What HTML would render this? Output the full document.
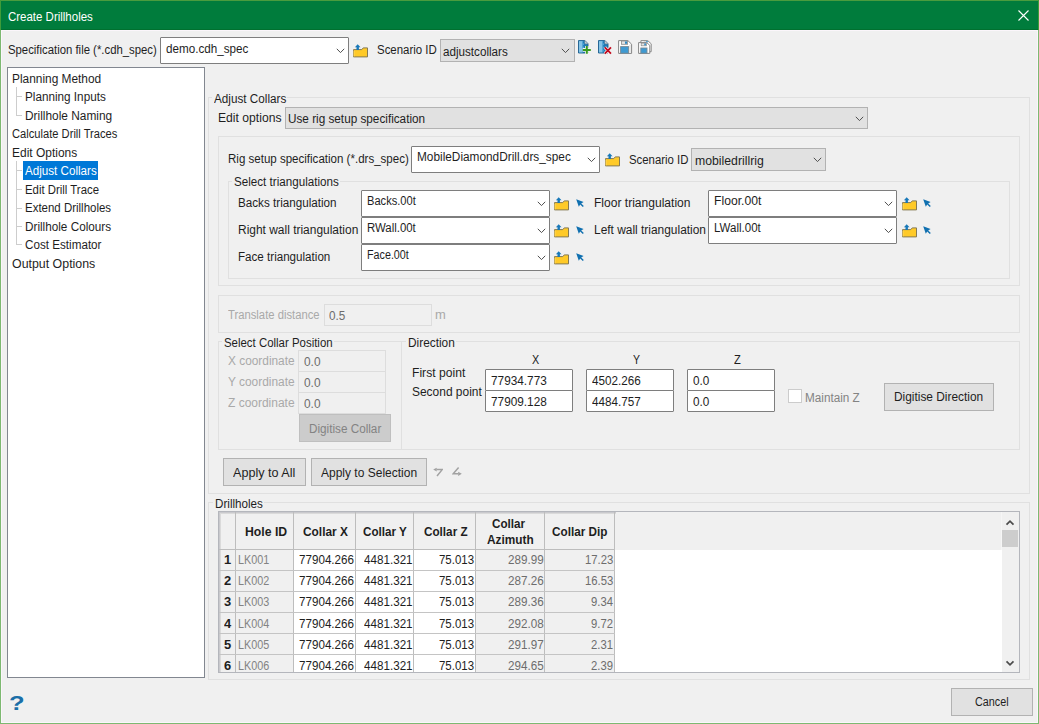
<!DOCTYPE html><html><head><meta charset='utf-8'><title>Create Drillholes</title><style>
html,body{margin:0;padding:0;background:#F0F0F0;}#w{position:relative;width:1039px;height:724px;overflow:hidden;font-family:"Liberation Sans", sans-serif;font-size:12.5px;line-height:16px;color:#1E1E1E;}.a{position:absolute;display:block;}.t{position:absolute;white-space:pre;transform-origin:0 0;display:block;}
</style></head><body><div id='w'>
<div class="a" style="left:0px;top:0px;width:1039px;height:724px;background:#F0F0F0;"></div>
<div class="a" style="left:0px;top:0px;width:1039px;height:30px;background:#007C3C;"></div>
<div class="a" style="left:0px;top:29px;width:1039px;height:1px;background:#00702F;"></div>
<div class="a" style="left:0px;top:0px;width:1039px;height:1px;background:#4A9C3E;"></div>
<div class="a" style="left:1px;top:30px;width:1037px;height:1px;background:#FBF6FB;"></div>
<div class="a" style="left:1px;top:31px;width:1px;height:692px;background:#FBF6FB;"></div>
<div class="a" style="left:1037px;top:31px;width:1px;height:692px;background:#FBF6FB;"></div>
<div class="a" style="left:1px;top:722px;width:1037px;height:1px;background:#FBF6FB;"></div>
<div class="a" style="left:0px;top:0px;width:1px;height:30px;background:#3F9B3A;"></div>
<div class="a" style="left:1038px;top:0px;width:1px;height:30px;background:#3F9B3A;"></div>
<div class="a" style="left:0px;top:30px;width:1px;height:694px;background:#7DB971;"></div>
<div class="a" style="left:1038px;top:30px;width:1px;height:694px;background:#7DB971;"></div>
<div class="a" style="left:0px;top:723px;width:1039px;height:1px;background:#7DB971;"></div>
<svg class="a" style="left:1017px;top:9px" width="13" height="13" viewBox="0 0 13 13"><path d="M1.5 1.5 L11.5 11.5 M11.5 1.5 L1.5 11.5" stroke="#fff" stroke-width="1.1" fill="none"/></svg>
<div class="a" style="left:160px;top:37px;width:189px;height:27px;background:#fff;border:1px solid #7E7E7E;box-sizing:border-box;border-radius:1px;"></div>
<svg class="a" style="left:335.5px;top:47.5px" width="9" height="6" viewBox="0 0 9 6"><path d="M0.8 0.8 L4.5 4.6 L8.2 0.8" stroke="#505050" stroke-width="1" fill="none"/></svg>
<svg class="a" style="left:352.5px;top:43.5px" width="16" height="14" viewBox="0 0 16 14"><path d="M0.5 5.6 H8.8 L10.2 3.9 H14.5 V12.9 H0.5 Z" fill="#FFCA28" stroke="#857A55" stroke-width="1" stroke-linejoin="round"/><path d="M1 6.6 V12.4" stroke="#FFD75E" stroke-width="1"/><path d="M4.7 0.3 L7.5 3.3 H5.9 V6 H3.5 V3.3 H1.9 Z" fill="#1878B8"/></svg>
<div class="a" style="left:440px;top:39px;width:135px;height:23px;background:#E1E1E1;border:1px solid #B2B2B2;box-sizing:border-box;"></div>
<svg class="a" style="left:561px;top:47.5px" width="9" height="6" viewBox="0 0 9 6"><path d="M0.8 0.8 L4.5 4.6 L8.2 0.8" stroke="#505050" stroke-width="1" fill="none"/></svg>
<svg class="a" style="left:578px;top:40px" width="14" height="15" viewBox="0 0 14 15"><path d="M0.5 0.6 H6.9 L10 3.8 V13 H0.5 Z" fill="#1E7BB5" stroke="#1C5F8E" stroke-width="0.9"/><rect x="1" y="1.1" width="3.4" height="11.4" fill="#86C4E6"/><path d="M4.4 1.1 H5.4 L4.8 2.6 L6 4.2 L4.9 5.8 L6 7.4 L4.9 9 L5.8 10.6 L4.8 12.5 H4.4 Z" fill="#5FAFDC"/><path d="M6.9 0.6 V3.8 H10 Z" fill="#DCE6EC" stroke="#7C8790" stroke-width="0.6"/><path d="M8.8 5.9 V13.9 M4.7 9.9 H12.9" stroke="#F4F4F4" stroke-width="3.6" fill="none"/><path d="M8.8 6.1 V13.8 M4.8 9.9 H12.8" stroke="#3A9A1F" stroke-width="2" fill="none"/></svg>
<svg class="a" style="left:598px;top:40px" width="14" height="15" viewBox="0 0 14 15"><path d="M0.5 0.6 H6.9 L10 3.8 V13 H0.5 Z" fill="#1E7BB5" stroke="#1C5F8E" stroke-width="0.9"/><rect x="1" y="1.1" width="3.4" height="11.4" fill="#86C4E6"/><path d="M4.4 1.1 H5.4 L4.8 2.6 L6 4.2 L4.9 5.8 L6 7.4 L4.9 9 L5.8 10.6 L4.8 12.5 H4.4 Z" fill="#5FAFDC"/><path d="M6.9 0.6 V3.8 H10 Z" fill="#DCE6EC" stroke="#7C8790" stroke-width="0.6"/><path d="M6.8 7.4 L13 13.6 M13 7.4 L6.8 13.6" stroke="#F4F4F4" stroke-width="3.2" fill="none"/><path d="M6.8 7.4 L13 13.6 M13 7.4 L6.8 13.6" stroke="#C20A1E" stroke-width="1.8" fill="none"/></svg>
<svg class="a" style="left:618px;top:40px" width="15" height="15" viewBox="0 0 15 15"><path d="M0.6 0.6 H9.9 L13.6 4.2 V13.4 H0.6 Z" fill="#fff" stroke="#858585" stroke-width="1"/><rect x="11.2" y="4.4" width="1.8" height="8.4" fill="#E8E8E8"/><rect x="3.4" y="1" width="6.2" height="3.3" fill="#E4E4E4" stroke="#8A8A8A" stroke-width="0.8"/><rect x="7" y="1.5" width="2" height="2.3" fill="#2E8AC6"/><rect x="2.6" y="6.6" width="8" height="6.6" fill="#3E9AD2" stroke="#7A8A94" stroke-width="0.9"/></svg>
<svg class="a" style="left:638px;top:40px" width="15" height="15" viewBox="0 0 15 15"><path d="M2.9 0.6 H9.7 L13.2 3.8 V11.7 H2.9 Z" fill="#fff" stroke="#8A8A8A" stroke-width="1"/><rect x="5.8" y="1" width="4" height="1.5" fill="#DCDCDC"/><rect x="8.2" y="1" width="1.6" height="1.4" fill="#3E9AD2"/><path d="M0.6 2.6 H8.8 L11.8 5.4 V13.4 H0.6 Z" fill="#fff" stroke="#858585" stroke-width="1"/><rect x="3.2" y="3.1" width="5.2" height="2.7" fill="#E4E4E4" stroke="#8A8A8A" stroke-width="0.7"/><rect x="6.3" y="3.5" width="1.6" height="1.9" fill="#2E8AC6"/><rect x="2.8" y="8" width="6.2" height="5.2" fill="#3E9AD2" stroke="#7A8A94" stroke-width="0.9"/></svg>
<div class="a" style="left:7px;top:67px;width:198px;height:611px;background:#fff;border:1px solid #828790;box-sizing:border-box;"></div>
<div class="a" style="left:17px;top:96px;width:5px;height:1px;background:#CDCDCD;"></div>
<div class="a" style="left:17px;top:115px;width:5px;height:1px;background:#CDCDCD;"></div>
<div class="a" style="left:23px;top:161px;width:75px;height:18.5px;background:#0078D7;"></div>
<div class="a" style="left:17px;top:170px;width:5px;height:1px;background:#CDCDCD;"></div>
<div class="a" style="left:17px;top:189px;width:5px;height:1px;background:#CDCDCD;"></div>
<div class="a" style="left:17px;top:208px;width:5px;height:1px;background:#CDCDCD;"></div>
<div class="a" style="left:17px;top:226px;width:5px;height:1px;background:#CDCDCD;"></div>
<div class="a" style="left:17px;top:244px;width:5px;height:1px;background:#CDCDCD;"></div>
<div class="a" style="left:16px;top:87px;width:1px;height:29px;background:#CDCDCD;"></div>
<div class="a" style="left:16px;top:161px;width:1px;height:84px;background:#CDCDCD;"></div>
<div class="a" style="left:208px;top:97px;width:822px;height:397px;border:1px solid #E0E0E0;box-sizing:border-box;"></div>
<div class="a" style="left:211.7px;top:95px;width:75.5px;height:5px;background:#F0F0F0;"></div>
<div class="a" style="left:285px;top:107px;width:583px;height:22px;background:#E1E1E1;border:1px solid #B2B2B2;box-sizing:border-box;"></div>
<svg class="a" style="left:855px;top:115.5px" width="9" height="6" viewBox="0 0 9 6"><path d="M0.8 0.8 L4.5 4.6 L8.2 0.8" stroke="#505050" stroke-width="1" fill="none"/></svg>
<div class="a" style="left:218px;top:136px;width:802px;height:150px;border:1px solid #E0E0E0;box-sizing:border-box;"></div>
<div class="a" style="left:411px;top:146px;width:189px;height:27px;background:#fff;border:1px solid #7E7E7E;box-sizing:border-box;border-radius:1px;"></div>
<svg class="a" style="left:586.5px;top:156.5px" width="9" height="6" viewBox="0 0 9 6"><path d="M0.8 0.8 L4.5 4.6 L8.2 0.8" stroke="#505050" stroke-width="1" fill="none"/></svg>
<svg class="a" style="left:604.5px;top:152.5px" width="16" height="14" viewBox="0 0 16 14"><path d="M0.5 5.6 H8.8 L10.2 3.9 H14.5 V12.9 H0.5 Z" fill="#FFCA28" stroke="#857A55" stroke-width="1" stroke-linejoin="round"/><path d="M1 6.6 V12.4" stroke="#FFD75E" stroke-width="1"/><path d="M4.7 0.3 L7.5 3.3 H5.9 V6 H3.5 V3.3 H1.9 Z" fill="#1878B8"/></svg>
<div class="a" style="left:691px;top:148px;width:135px;height:23px;background:#E1E1E1;border:1px solid #B2B2B2;box-sizing:border-box;"></div>
<svg class="a" style="left:812.5px;top:156.5px" width="9" height="6" viewBox="0 0 9 6"><path d="M0.8 0.8 L4.5 4.6 L8.2 0.8" stroke="#505050" stroke-width="1" fill="none"/></svg>
<div class="a" style="left:228px;top:181px;width:782px;height:98px;border:1px solid #E0E0E0;box-sizing:border-box;"></div>
<div class="a" style="left:232px;top:179px;width:108px;height:5px;background:#F0F0F0;"></div>
<div class="a" style="left:361px;top:190px;width:189px;height:27px;background:#fff;border:1px solid #7E7E7E;box-sizing:border-box;border-radius:1px;"></div>
<svg class="a" style="left:536.5px;top:200.5px" width="9" height="6" viewBox="0 0 9 6"><path d="M0.8 0.8 L4.5 4.6 L8.2 0.8" stroke="#505050" stroke-width="1" fill="none"/></svg>
<svg class="a" style="left:554px;top:196.5px" width="16" height="14" viewBox="0 0 16 14"><path d="M0.5 5.6 H8.8 L10.2 3.9 H14.5 V12.9 H0.5 Z" fill="#FFCA28" stroke="#857A55" stroke-width="1" stroke-linejoin="round"/><path d="M1 6.6 V12.4" stroke="#FFD75E" stroke-width="1"/><path d="M4.7 0.3 L7.5 3.3 H5.9 V6 H3.5 V3.3 H1.9 Z" fill="#1878B8"/></svg>
<svg class="a" style="left:575.5px;top:198.5px" width="9" height="9" viewBox="0 0 9 9"><path d="M0.2 0.2 L7.6 3 L5.2 4.4 L7.8 7 L6.8 8 L4.2 5.4 L2.8 7.8 Z" fill="#1070B0"/></svg>
<div class="a" style="left:361px;top:217px;width:189px;height:27px;background:#fff;border:1px solid #7E7E7E;box-sizing:border-box;border-radius:1px;"></div>
<svg class="a" style="left:536.5px;top:227.5px" width="9" height="6" viewBox="0 0 9 6"><path d="M0.8 0.8 L4.5 4.6 L8.2 0.8" stroke="#505050" stroke-width="1" fill="none"/></svg>
<svg class="a" style="left:554px;top:223.5px" width="16" height="14" viewBox="0 0 16 14"><path d="M0.5 5.6 H8.8 L10.2 3.9 H14.5 V12.9 H0.5 Z" fill="#FFCA28" stroke="#857A55" stroke-width="1" stroke-linejoin="round"/><path d="M1 6.6 V12.4" stroke="#FFD75E" stroke-width="1"/><path d="M4.7 0.3 L7.5 3.3 H5.9 V6 H3.5 V3.3 H1.9 Z" fill="#1878B8"/></svg>
<svg class="a" style="left:575.5px;top:225.5px" width="9" height="9" viewBox="0 0 9 9"><path d="M0.2 0.2 L7.6 3 L5.2 4.4 L7.8 7 L6.8 8 L4.2 5.4 L2.8 7.8 Z" fill="#1070B0"/></svg>
<div class="a" style="left:361px;top:244px;width:189px;height:27px;background:#fff;border:1px solid #7E7E7E;box-sizing:border-box;border-radius:1px;"></div>
<svg class="a" style="left:536.5px;top:254.5px" width="9" height="6" viewBox="0 0 9 6"><path d="M0.8 0.8 L4.5 4.6 L8.2 0.8" stroke="#505050" stroke-width="1" fill="none"/></svg>
<svg class="a" style="left:554px;top:250.5px" width="16" height="14" viewBox="0 0 16 14"><path d="M0.5 5.6 H8.8 L10.2 3.9 H14.5 V12.9 H0.5 Z" fill="#FFCA28" stroke="#857A55" stroke-width="1" stroke-linejoin="round"/><path d="M1 6.6 V12.4" stroke="#FFD75E" stroke-width="1"/><path d="M4.7 0.3 L7.5 3.3 H5.9 V6 H3.5 V3.3 H1.9 Z" fill="#1878B8"/></svg>
<svg class="a" style="left:575.5px;top:252.5px" width="9" height="9" viewBox="0 0 9 9"><path d="M0.2 0.2 L7.6 3 L5.2 4.4 L7.8 7 L6.8 8 L4.2 5.4 L2.8 7.8 Z" fill="#1070B0"/></svg>
<div class="a" style="left:708px;top:190px;width:189px;height:27px;background:#fff;border:1px solid #7E7E7E;box-sizing:border-box;border-radius:1px;"></div>
<svg class="a" style="left:883.5px;top:200.5px" width="9" height="6" viewBox="0 0 9 6"><path d="M0.8 0.8 L4.5 4.6 L8.2 0.8" stroke="#505050" stroke-width="1" fill="none"/></svg>
<svg class="a" style="left:901.5px;top:196.5px" width="16" height="14" viewBox="0 0 16 14"><path d="M0.5 5.6 H8.8 L10.2 3.9 H14.5 V12.9 H0.5 Z" fill="#FFCA28" stroke="#857A55" stroke-width="1" stroke-linejoin="round"/><path d="M1 6.6 V12.4" stroke="#FFD75E" stroke-width="1"/><path d="M4.7 0.3 L7.5 3.3 H5.9 V6 H3.5 V3.3 H1.9 Z" fill="#1878B8"/></svg>
<svg class="a" style="left:922.5px;top:198.5px" width="9" height="9" viewBox="0 0 9 9"><path d="M0.2 0.2 L7.6 3 L5.2 4.4 L7.8 7 L6.8 8 L4.2 5.4 L2.8 7.8 Z" fill="#1070B0"/></svg>
<div class="a" style="left:708px;top:217px;width:189px;height:27px;background:#fff;border:1px solid #7E7E7E;box-sizing:border-box;border-radius:1px;"></div>
<svg class="a" style="left:883.5px;top:227.5px" width="9" height="6" viewBox="0 0 9 6"><path d="M0.8 0.8 L4.5 4.6 L8.2 0.8" stroke="#505050" stroke-width="1" fill="none"/></svg>
<svg class="a" style="left:901.5px;top:223.5px" width="16" height="14" viewBox="0 0 16 14"><path d="M0.5 5.6 H8.8 L10.2 3.9 H14.5 V12.9 H0.5 Z" fill="#FFCA28" stroke="#857A55" stroke-width="1" stroke-linejoin="round"/><path d="M1 6.6 V12.4" stroke="#FFD75E" stroke-width="1"/><path d="M4.7 0.3 L7.5 3.3 H5.9 V6 H3.5 V3.3 H1.9 Z" fill="#1878B8"/></svg>
<svg class="a" style="left:922.5px;top:225.5px" width="9" height="9" viewBox="0 0 9 9"><path d="M0.2 0.2 L7.6 3 L5.2 4.4 L7.8 7 L6.8 8 L4.2 5.4 L2.8 7.8 Z" fill="#1070B0"/></svg>
<div class="a" style="left:218px;top:295px;width:802px;height:38px;border:1px solid #E0E0E0;box-sizing:border-box;"></div>
<div class="a" style="left:324px;top:304px;width:108px;height:22px;background:#F0F0F0;border:1px solid #DDDDDD;box-sizing:border-box;"></div>
<div class="a" style="left:218px;top:341px;width:184px;height:109px;border:1px solid #E0E0E0;box-sizing:border-box;"></div>
<div class="a" style="left:221.8px;top:339px;width:111.80000000000001px;height:5px;background:#F0F0F0;"></div>
<div class="a" style="left:401px;top:341px;width:619px;height:109px;border:1px solid #E0E0E0;box-sizing:border-box;"></div>
<div class="a" style="left:406px;top:339px;width:50px;height:5px;background:#F0F0F0;"></div>
<div class="a" style="left:298px;top:350px;width:88px;height:22px;background:#F0F0F0;border:1px solid #DDDDDD;box-sizing:border-box;"></div>
<div class="a" style="left:298px;top:371px;width:88px;height:22px;background:#F0F0F0;border:1px solid #DDDDDD;box-sizing:border-box;"></div>
<div class="a" style="left:298px;top:392px;width:88px;height:22px;background:#F0F0F0;border:1px solid #DDDDDD;box-sizing:border-box;"></div>
<div class="a" style="left:299px;top:414px;width:92px;height:28px;background:#CCCCCC;border:1px solid #BFBFBF;box-sizing:border-box;"></div>
<div class="a" style="left:485px;top:369px;width:88px;height:22px;background:#fff;border:1px solid #7E7E7E;box-sizing:border-box;border-radius:1px;"></div>
<div class="a" style="left:485px;top:390px;width:88px;height:22px;background:#fff;border:1px solid #7E7E7E;box-sizing:border-box;border-radius:1px;"></div>
<div class="a" style="left:586px;top:369px;width:88px;height:22px;background:#fff;border:1px solid #7E7E7E;box-sizing:border-box;border-radius:1px;"></div>
<div class="a" style="left:586px;top:390px;width:88px;height:22px;background:#fff;border:1px solid #7E7E7E;box-sizing:border-box;border-radius:1px;"></div>
<div class="a" style="left:687px;top:369px;width:88px;height:22px;background:#fff;border:1px solid #7E7E7E;box-sizing:border-box;border-radius:1px;"></div>
<div class="a" style="left:687px;top:390px;width:88px;height:22px;background:#fff;border:1px solid #7E7E7E;box-sizing:border-box;border-radius:1px;"></div>
<div class="a" style="left:788px;top:389px;width:14px;height:14px;background:#fff;border:1px solid #CCCCCC;box-sizing:border-box;"></div>
<div class="a" style="left:884px;top:383px;width:110px;height:28px;background:#E1E1E1;border:1px solid #B2B2B2;box-sizing:border-box;"></div>
<div class="a" style="left:223px;top:458px;width:83px;height:28px;background:#E1E1E1;border:1px solid #B2B2B2;box-sizing:border-box;"></div>
<div class="a" style="left:311px;top:458px;width:116px;height:28px;background:#E1E1E1;border:1px solid #B2B2B2;box-sizing:border-box;"></div>
<svg class="a" style="left:433px;top:467px" width="10" height="10" viewBox="0 0 10 10"><path d="M0.2 2.6 L3.7 0.8 V4.4 Z" fill="#A2A2A2"/><path d="M3.6 2.6 H9.2 L4.0 9.0" stroke="#A2A2A2" stroke-width="1.5" fill="none" stroke-linejoin="miter"/></svg>
<svg class="a" style="left:452px;top:467px" width="10" height="10" viewBox="0 0 10 10"><path d="M9.8 6.8 L6.2 4.7 V8.9 Z" fill="#A2A2A2"/><path d="M6.6 0.6 L1.2 6.8 H6.4" stroke="#A2A2A2" stroke-width="1.5" fill="none" stroke-linejoin="miter"/></svg>
<div class="a" style="left:208px;top:502px;width:822px;height:178px;border:1px solid #E0E0E0;box-sizing:border-box;"></div>
<div class="a" style="left:212.9px;top:500px;width:51.099999999999994px;height:5px;background:#F0F0F0;"></div>
<div class="a" style="left:218px;top:511px;width:802px;height:162px;background:#fff;border:1px solid #B4B6BC;box-sizing:border-box;"></div>
<div class="a" style="left:219px;top:512px;width:783px;height:38px;background:#F0F0F0;"></div>
<div class="a" style="left:1002px;top:512px;width:17px;height:160px;background:#F0F0F0;"></div>
<div class="a" style="left:1001px;top:512px;width:1px;height:38px;background:#F6F6F6;"></div>
<div class="a" style="left:1002px;top:530px;width:16px;height:17px;background:#CDCDCD;"></div>
<svg class="a" style="left:1005px;top:519px" width="10" height="7" viewBox="0 0 10 7"><path d="M1.5 5.6 L5 2.1 L8.5 5.6" stroke="#4C4C4C" stroke-width="1.7" fill="none"/></svg>
<svg class="a" style="left:1005px;top:660px" width="10" height="7" viewBox="0 0 10 7"><path d="M1.5 1.4 L5 4.9 L8.5 1.4" stroke="#4C4C4C" stroke-width="1.7" fill="none"/></svg>
<div class="a" style="left:219px;top:550px;width:74px;height:122px;background:#F0F0F0;"></div>
<div class="a" style="left:476px;top:550px;width:139px;height:122px;background:#F0F0F0;"></div>
<div class="a" style="left:219px;top:512px;width:397px;height:1px;background:#C9C9CD;"></div>
<div class="a" style="left:219px;top:513px;width:397px;height:1px;background:#DADADA;"></div>
<div class="a" style="left:219px;top:512px;width:1px;height:160px;background:#C9C9CD;"></div>
<div class="a" style="left:220px;top:513px;width:1px;height:159px;background:#DADADA;"></div>
<div class="a" style="left:235px;top:512px;width:1px;height:160px;background:#BDBDBD;"></div>
<div class="a" style="left:293px;top:512px;width:1px;height:160px;background:#BDBDBD;"></div>
<div class="a" style="left:355px;top:512px;width:1px;height:160px;background:#BDBDBD;"></div>
<div class="a" style="left:413px;top:512px;width:1px;height:160px;background:#BDBDBD;"></div>
<div class="a" style="left:475px;top:512px;width:1px;height:160px;background:#BDBDBD;"></div>
<div class="a" style="left:544px;top:512px;width:1px;height:160px;background:#BDBDBD;"></div>
<div class="a" style="left:614px;top:512px;width:1px;height:160px;background:#BDBDBD;"></div>
<div class="a" style="left:219px;top:549px;width:396px;height:1px;background:#BDBDBD;"></div>
<div class="a" style="left:219px;top:570px;width:396px;height:1px;background:#C4C4C4;"></div>
<div class="a" style="left:219px;top:591px;width:396px;height:1px;background:#C4C4C4;"></div>
<div class="a" style="left:219px;top:612px;width:396px;height:1px;background:#C4C4C4;"></div>
<div class="a" style="left:219px;top:633px;width:396px;height:1px;background:#C4C4C4;"></div>
<div class="a" style="left:219px;top:654px;width:396px;height:1px;background:#C4C4C4;"></div>
<div class="a" style="left:209px;top:673px;width:820px;height:6px;background:#F0F0F0;"></div>
<div class="a" style="left:218px;top:672px;width:802px;height:1px;background:#B4B6BC;"></div>
<div class="a" style="left:951px;top:688px;width:81.5px;height:28px;background:#E1E1E1;border:1px solid #B2B2B2;box-sizing:border-box;"></div>
<span class="t" style="left:8.0px;top:9.0px;transform:scaleX(0.9177);color:#fff;">Create Drillholes</span>
<span class="t" style="left:8.0px;top:42.0px;transform:scaleX(0.9074);">Specification file (*.cdh_spec)</span>
<span class="t" style="left:165.5px;top:41.0px;transform:scaleX(0.9324);">demo.cdh_spec</span>
<span class="t" style="left:377.0px;top:42.0px;transform:scaleX(0.9156);">Scenario ID</span>
<span class="t" style="left:443.0px;top:44.0px;transform:scaleX(0.9326);">adjustcollars</span>
<span class="t" style="left:12.4px;top:71.0px;transform:scaleX(0.9507);">Planning Method</span>
<span class="t" style="left:25.0px;top:89.0px;transform:scaleX(0.9375);">Planning Inputs</span>
<span class="t" style="left:25.0px;top:108.0px;transform:scaleX(0.9509);">Drillhole Naming</span>
<span class="t" style="left:12.4px;top:126.0px;transform:scaleX(0.8925);">Calculate Drill Traces</span>
<span class="t" style="left:12.4px;top:145.0px;transform:scaleX(0.9575);">Edit Options</span>
<span class="t" style="left:25.0px;top:163.0px;transform:scaleX(0.9297);color:#fff;">Adjust Collars</span>
<span class="t" style="left:25.0px;top:182.0px;transform:scaleX(0.9104);">Edit Drill Trace</span>
<span class="t" style="left:25.0px;top:200.0px;transform:scaleX(0.9179);">Extend Drillholes</span>
<span class="t" style="left:25.0px;top:219.0px;transform:scaleX(0.9389);">Drillhole Colours</span>
<span class="t" style="left:25.0px;top:237.0px;transform:scaleX(0.9333);">Cost Estimator</span>
<span class="t" style="left:12.4px;top:256.0px;transform:scaleX(0.9907);">Output Options</span>
<span class="t" style="left:213.7px;top:91.0px;transform:scaleX(0.9374);">Adjust Collars</span>
<span class="t" style="left:217.7px;top:110.0px;transform:scaleX(0.9720);">Edit options</span>
<span class="t" style="left:287.5px;top:111.0px;transform:scaleX(0.9396);">Use rig setup specification</span>
<span class="t" style="left:228.0px;top:151.0px;transform:scaleX(0.9227);">Rig setup specification (*.drs_spec)</span>
<span class="t" style="left:417.0px;top:149.0px;transform:scaleX(0.9461);">MobileDiamondDrill.drs_spec</span>
<span class="t" style="left:628.8px;top:152.0px;transform:scaleX(0.9110);">Scenario ID</span>
<span class="t" style="left:694.5px;top:153.0px;transform:scaleX(0.9804);">mobiledrillrig</span>
<span class="t" style="left:234.0px;top:174.0px;transform:scaleX(0.9309);">Select triangulations</span>
<span class="t" style="left:238.0px;top:195.0px;transform:scaleX(0.9335);">Backs triangulation</span>
<span class="t" style="left:367.0px;top:193.0px;transform:scaleX(0.8890);">Backs.00t</span>
<span class="t" style="left:238.0px;top:222.0px;transform:scaleX(0.9565);">Right wall triangulation</span>
<span class="t" style="left:367.0px;top:220.0px;transform:scaleX(0.9121);">RWall.00t</span>
<span class="t" style="left:238.0px;top:249.0px;transform:scaleX(0.9288);">Face triangulation</span>
<span class="t" style="left:367.0px;top:247.0px;transform:scaleX(0.8594);">Face.00t</span>
<span class="t" style="left:593.8px;top:195.0px;transform:scaleX(0.9644);">Floor triangulation</span>
<span class="t" style="left:714.0px;top:193.0px;transform:scaleX(0.9724);">Floor.00t</span>
<span class="t" style="left:593.8px;top:222.0px;transform:scaleX(0.9537);">Left wall triangulation</span>
<span class="t" style="left:714.0px;top:220.0px;transform:scaleX(0.9227);">LWall.00t</span>
<span class="t" style="left:228.0px;top:307.0px;transform:scaleX(0.9008);color:#A9A9A9;">Translate distance</span>
<span class="t" style="left:329.0px;top:308.0px;transform:scaleX(0.9373);color:#6D6D6D;">0.5</span>
<span class="t" style="left:435.0px;top:307.0px;transform:scaleX(1.0363);color:#A9A9A9;">m</span>
<span class="t" style="left:223.8px;top:335.0px;transform:scaleX(0.9140);">Select Collar Position</span>
<span class="t" style="left:408.0px;top:335.0px;transform:scaleX(0.9487);">Direction</span>
<span class="t" style="left:228.0px;top:353.0px;transform:scaleX(0.9489);color:#A9A9A9;">X coordinate</span>
<span class="t" style="left:303.8px;top:354.0px;transform:scaleX(0.9488);color:#6D6D6D;">0.0</span>
<span class="t" style="left:228.0px;top:374.0px;transform:scaleX(0.9519);color:#A9A9A9;">Y coordinate</span>
<span class="t" style="left:303.8px;top:375.0px;transform:scaleX(0.9488);color:#6D6D6D;">0.0</span>
<span class="t" style="left:228.0px;top:395.0px;transform:scaleX(0.9585);color:#A9A9A9;">Z coordinate</span>
<span class="t" style="left:303.8px;top:396.0px;transform:scaleX(0.9488);color:#6D6D6D;">0.0</span>
<span class="t" style="left:309.0px;top:421.0px;transform:scaleX(0.9376);color:#838383;">Digitise Collar</span>
<span class="t" style="left:532.2px;top:352.0px;transform:scaleX(0.8629);">X</span>
<span class="t" style="left:632.6px;top:352.0px;transform:scaleX(0.8390);">Y</span>
<span class="t" style="left:734.2px;top:352.0px;transform:scaleX(0.8900);">Z</span>
<span class="t" style="left:412.0px;top:365.0px;transform:scaleX(0.9710);">First point</span>
<span class="t" style="left:412.0px;top:384.0px;transform:scaleX(0.9564);">Second point</span>
<span class="t" style="left:490.5px;top:373.0px;transform:scaleX(0.9443);">77934.773</span>
<span class="t" style="left:490.5px;top:394.0px;transform:scaleX(0.9443);">77909.128</span>
<span class="t" style="left:591.5px;top:373.0px;transform:scaleX(0.9359);">4502.266</span>
<span class="t" style="left:591.5px;top:394.0px;transform:scaleX(0.9359);">4484.757</span>
<span class="t" style="left:692.5px;top:373.0px;transform:scaleX(0.9373);">0.0</span>
<span class="t" style="left:692.5px;top:394.0px;transform:scaleX(0.9373);">0.0</span>
<span class="t" style="left:805.4px;top:390.0px;transform:scaleX(0.9373);color:#838383;">Maintain Z</span>
<span class="t" style="left:894.2px;top:389.0px;transform:scaleX(0.9501);">Digitise Direction</span>
<span class="t" style="left:233.0px;top:465.0px;transform:scaleX(1.0074);">Apply to All</span>
<span class="t" style="left:320.5px;top:465.0px;transform:scaleX(0.9604);">Apply to Selection</span>
<span class="t" style="left:214.9px;top:496.0px;transform:scaleX(0.9318);">Drillholes</span>
<span class="t" style="left:244.5px;top:524.0px;transform:scaleX(0.9776);font-weight:bold;">Hole ID</span>
<span class="t" style="left:302.6px;top:524.0px;transform:scaleX(0.9503);font-weight:bold;">Collar X</span>
<span class="t" style="left:363.3px;top:524.0px;transform:scaleX(0.9316);font-weight:bold;">Collar Y</span>
<span class="t" style="left:423.6px;top:524.0px;transform:scaleX(0.9367);font-weight:bold;">Collar Z</span>
<span class="t" style="left:492.4px;top:516.0px;transform:scaleX(0.9340);font-weight:bold;">Collar</span>
<span class="t" style="left:486.6px;top:532.0px;transform:scaleX(0.9470);font-weight:bold;">Azimuth</span>
<span class="t" style="left:552.2px;top:524.0px;transform:scaleX(0.9382);font-weight:bold;">Collar Dip</span>
<span class="t" style="left:224.3px;top:552.0px;transform:scaleX(1.0355);font-weight:bold;">1</span>
<span class="t" style="left:237.8px;top:552.0px;transform:scaleX(0.8657);color:#838383;">LK001</span>
<span class="t" style="left:298.8px;top:552.0px;transform:scaleX(0.9307);">77904.266</span>
<span class="t" style="left:363.8px;top:552.0px;transform:scaleX(0.9321);">4481.321</span>
<span class="t" style="left:438.8px;top:552.0px;transform:scaleX(0.9154);">75.013</span>
<span class="t" style="left:507.6px;top:552.0px;transform:scaleX(0.9337);color:#6D6D6D;">289.99</span>
<span class="t" style="left:584.5px;top:552.0px;transform:scaleX(0.9047);color:#6D6D6D;">17.23</span>
<span class="t" style="left:224.3px;top:573.0px;transform:scaleX(1.0355);font-weight:bold;">2</span>
<span class="t" style="left:237.8px;top:573.0px;transform:scaleX(0.8657);color:#838383;">LK002</span>
<span class="t" style="left:298.8px;top:573.0px;transform:scaleX(0.9307);">77904.266</span>
<span class="t" style="left:363.8px;top:573.0px;transform:scaleX(0.9321);">4481.321</span>
<span class="t" style="left:438.8px;top:573.0px;transform:scaleX(0.9154);">75.013</span>
<span class="t" style="left:507.6px;top:573.0px;transform:scaleX(0.9337);color:#6D6D6D;">287.26</span>
<span class="t" style="left:584.5px;top:573.0px;transform:scaleX(0.9047);color:#6D6D6D;">16.53</span>
<span class="t" style="left:224.3px;top:594.0px;transform:scaleX(1.0355);font-weight:bold;">3</span>
<span class="t" style="left:237.8px;top:594.0px;transform:scaleX(0.8657);color:#838383;">LK003</span>
<span class="t" style="left:298.8px;top:594.0px;transform:scaleX(0.9307);">77904.266</span>
<span class="t" style="left:363.8px;top:594.0px;transform:scaleX(0.9321);">4481.321</span>
<span class="t" style="left:438.8px;top:594.0px;transform:scaleX(0.9154);">75.013</span>
<span class="t" style="left:507.6px;top:594.0px;transform:scaleX(0.9337);color:#6D6D6D;">289.36</span>
<span class="t" style="left:590.8px;top:594.0px;transform:scaleX(0.9037);color:#6D6D6D;">9.34</span>
<span class="t" style="left:224.3px;top:616.0px;transform:scaleX(1.0355);font-weight:bold;">4</span>
<span class="t" style="left:237.8px;top:616.0px;transform:scaleX(0.8657);color:#838383;">LK004</span>
<span class="t" style="left:298.8px;top:616.0px;transform:scaleX(0.9307);">77904.266</span>
<span class="t" style="left:363.8px;top:616.0px;transform:scaleX(0.9321);">4481.321</span>
<span class="t" style="left:438.8px;top:616.0px;transform:scaleX(0.9154);">75.013</span>
<span class="t" style="left:507.6px;top:616.0px;transform:scaleX(0.9337);color:#6D6D6D;">292.08</span>
<span class="t" style="left:590.8px;top:616.0px;transform:scaleX(0.9037);color:#6D6D6D;">9.72</span>
<span class="t" style="left:224.3px;top:637.0px;transform:scaleX(1.0355);font-weight:bold;">5</span>
<span class="t" style="left:237.8px;top:637.0px;transform:scaleX(0.8657);color:#838383;">LK005</span>
<span class="t" style="left:298.8px;top:637.0px;transform:scaleX(0.9307);">77904.266</span>
<span class="t" style="left:363.8px;top:637.0px;transform:scaleX(0.9321);">4481.321</span>
<span class="t" style="left:438.8px;top:637.0px;transform:scaleX(0.9154);">75.013</span>
<span class="t" style="left:507.6px;top:637.0px;transform:scaleX(0.9337);color:#6D6D6D;">291.97</span>
<span class="t" style="left:590.8px;top:637.0px;transform:scaleX(0.9037);color:#6D6D6D;">2.31</span>
<span class="t" style="left:224.3px;top:658.0px;transform:scaleX(1.0355);font-weight:bold;">6</span>
<span class="t" style="left:237.8px;top:658.0px;transform:scaleX(0.8657);color:#838383;">LK006</span>
<span class="t" style="left:298.8px;top:658.0px;transform:scaleX(0.9307);">77904.266</span>
<span class="t" style="left:363.8px;top:658.0px;transform:scaleX(0.9321);">4481.321</span>
<span class="t" style="left:438.8px;top:658.0px;transform:scaleX(0.9154);">75.013</span>
<span class="t" style="left:507.6px;top:658.0px;transform:scaleX(0.9337);color:#6D6D6D;">294.65</span>
<span class="t" style="left:590.8px;top:658.0px;transform:scaleX(0.9037);color:#6D6D6D;">2.39</span>
<span class="t" style="left:8.6px;top:690.9px;transform:scaleX(1.2767);color:#1B6FA8;font-weight:bold;font-size:20px;line-height:25px;">?</span>
<span class="t" style="left:975.0px;top:694.0px;transform:scaleX(0.8633);">Cancel</span>
</div></body></html>
